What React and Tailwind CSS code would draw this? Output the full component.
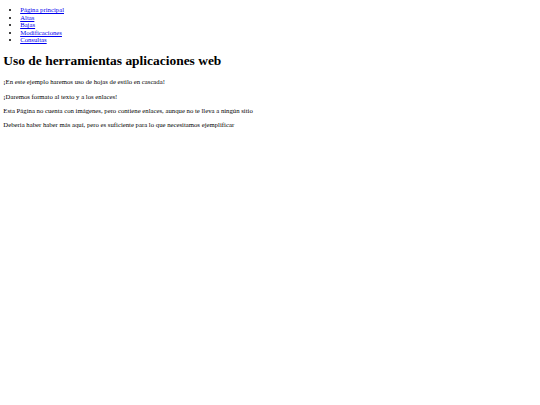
export default function App() {
  const links = ["Página principal", "Altas", "Bajas", "Modificaciones", "Consultas"];
  return (
    <div className="min-h-[405px] bg-white px-[3.36px] text-black font-['Liberation_Serif','Times_New_Roman',serif] text-[6.72px] leading-[7.5px]">
      <ul className="list-disc pl-[16.8px] mt-[6.3px] mb-[6.8px]">
        {links.map((l) => (
          <li key={l}>
            <a href="#" className="text-[#0000ee] underline">{l}</a>
          </li>
        ))}
      </ul>
      <h1 className="text-[13.44px] font-bold my-[9.5px] leading-[15.5px]">Uso de herramientas aplicaciones web</h1>
      <p className="my-[6.8px]">¡En este ejemplo haremos uso de hojas de estilo en cascada!</p>
      <p className="my-[6.8px]">¡Daremos formato al texto y a los enlaces!</p>
      <p className="my-[6.8px]">Esta Página no cuenta con imágenes, pero contiene enlaces, aunque no te lleva a ningún sitio</p>
      <p className="my-[6.8px]">Deberia haber haber más aquí, pero es suficiente para lo que necesitamos ejemplificar</p>
    </div>
  );
}
